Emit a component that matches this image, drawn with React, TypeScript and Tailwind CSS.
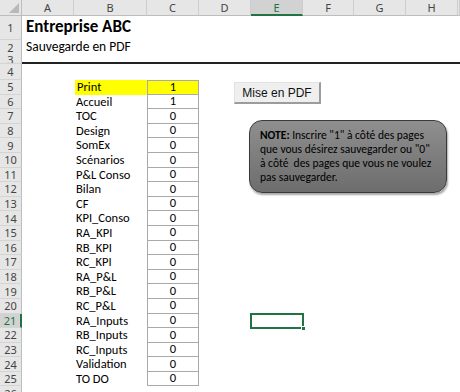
import React from 'react';

const columns = ['A', 'B', 'C', 'D', 'E', 'F', 'G', 'H', ''];

const pages = [
  ['Print', '1'],
  ['Accueil', '1'],
  ['TOC', '0'],
  ['Design', '0'],
  ['SomEx', '0'],
  ['Scénarios', '0'],
  ['P&L Conso', '0'],
  ['Bilan', '0'],
  ['CF', '0'],
  ['KPI_Conso', '0'],
  ['RA_KPI', '0'],
  ['RB_KPI', '0'],
  ['RC_KPI', '0'],
  ['RA_P&L', '0'],
  ['RB_P&L', '0'],
  ['RC_P&L', '0'],
  ['RA_Inputs', '0'],
  ['RB_Inputs', '0'],
  ['RC_Inputs', '0'],
  ['Validation', '0'],
  ['TO DO', '0'],
];

const grid = 'grid grid-cols-[22px_52px_73px_52px_52px_52px_51px_52px_52px_1fr]';
const calibri = "font-['Carlito','Lato',sans-serif]";

const RowHead = ({ n, selected }: { n: number; selected?: boolean }) => (
  <div
    className={
      'flex items-center justify-center overflow-hidden border-b border-[#d4d4d4] text-[11px] leading-none font-["Noto_Sans",sans-serif] ' +
      (selected
        ? 'bg-[#d2d2d2] text-[#217346] border-r-2 border-r-[#217346]'
        : 'bg-[#e6e6e6] text-[#444] border-r border-r-[#bdbdbd]')
    }
  >
    {n}
  </div>
);

const App: React.FC = () => {
  return (
    <div className={'relative w-[460px] h-[392px] overflow-hidden bg-white text-black ' + calibri}>
      {/* Column headers */}
      <div className={grid + ' h-4'}>
        <div className="relative bg-[#e6e6e6] border-r border-b border-[#bdbdbd]">
          <svg className="absolute right-[2px] bottom-[2px]" width="10" height="10" viewBox="0 0 10 10">
            <polygon points="10,0 10,10 0,10" fill="#b9b9b9" />
          </svg>
        </div>
        {columns.map((c, i) => (
          <div
            key={i}
            className={
              'flex items-center justify-center border-r border-[#cdcdcd] text-[11px] leading-none font-["Noto_Sans",sans-serif] ' +
              (c === 'E'
                ? 'bg-[#d2d2d2] text-[#217346] border-b-2 border-b-[#217346]'
                : 'bg-[#e6e6e6] text-[#444] border-b border-b-[#bdbdbd]')
            }
          >
            {c}
          </div>
        ))}
      </div>

      {/* Row 1 */}
      <div className={grid + ' h-6'}>
        <RowHead n={1} />
        <div className="col-span-4 flex items-end pl-[4px] pb-[5px] text-[17px] font-bold leading-none whitespace-nowrap">
          Entreprise ABC
        </div>
      </div>

      {/* Row 2 */}
      <div className={grid + ' h-[15px]'}>
        <RowHead n={2} />
        <div className="col-span-4 flex items-end pl-[4px] pb-[2px] text-[13.5px] leading-none whitespace-nowrap">
          Sauvegarde en PDF
        </div>
      </div>

      {/* Row 3 with thick bottom line */}
      <div className={grid + ' h-[9px]'}>
        <RowHead n={3} />
        <div className="col-span-9 border-b-2 border-[#222]" />
      </div>

      {/* Row 4 */}
      <div className={grid + ' h-4'}>
        <RowHead n={4} />
      </div>

      {/* Rows 5 - 25 */}
      {pages.map(([label, value], i) => {
        const n = i + 5;
        const hi = n === 5;
        return (
          <div key={n} className={grid + ' h-[14.6px]'}>
            <RowHead n={n} selected={n === 21} />
            <div />
            <div
              className={
                'flex items-center pl-[2px] text-[12.5px] leading-none whitespace-nowrap ' +
                (hi ? 'bg-[#ffff00] ml-px' : '')
              }
            >
              {label}
            </div>
            <div
              className={
                'flex items-center justify-center border-x border-b border-[#a9a9a9] text-[12.5px] leading-none ' +
                (hi ? 'bg-[#ffff00] border-t' : '')
              }
            >
              {value}
            </div>
            <div />
            <div className="relative">
              {n === 21 && (
                <>
                  <div className="absolute -inset-px border-2 border-[#217346]" />
                  <div className="absolute -right-[3px] -bottom-[3px] w-[5px] h-[5px] bg-[#217346] border border-white" />
                </>
              )}
            </div>
          </div>
        );
      })}

      {/* Row 26 */}
      <div className={grid + ' h-4'}>
        <RowHead n={26} />
      </div>

      {/* Mise en PDF button */}
      <div className="absolute left-[234px] top-[82px] w-[87px] h-[22px] flex items-center justify-center bg-[#efefef] border-t border-l border-[#e2e2e2] border-r-2 border-b-2 border-r-[#9c9c9c] border-b-[#9c9c9c] text-[12px] text-[#111] font-['Liberation_Sans',sans-serif]">
        Mise en PDF
      </div>

      {/* Note shape */}
      <div className="absolute left-[249px] top-[120px] w-[198px] h-[73px] rounded-[13px] border border-[#3a3a3a] bg-linear-to-b from-[#8f8f8f] to-[#6d6d6d] shadow-[1px_2px_2px_rgba(0,0,0,0.35)] pl-[10px] pt-[7px] text-[11.5px] leading-[14px] text-black whitespace-pre">
        <span className="font-bold">NOTE:</span>
        {' Inscrire "1" à côté des pages\nque vous désirez sauvegarder ou "0"\nà côté  des pages que vous ne voulez\npas sauvegarder.'}
      </div>
    </div>
  );
};

export default App;
